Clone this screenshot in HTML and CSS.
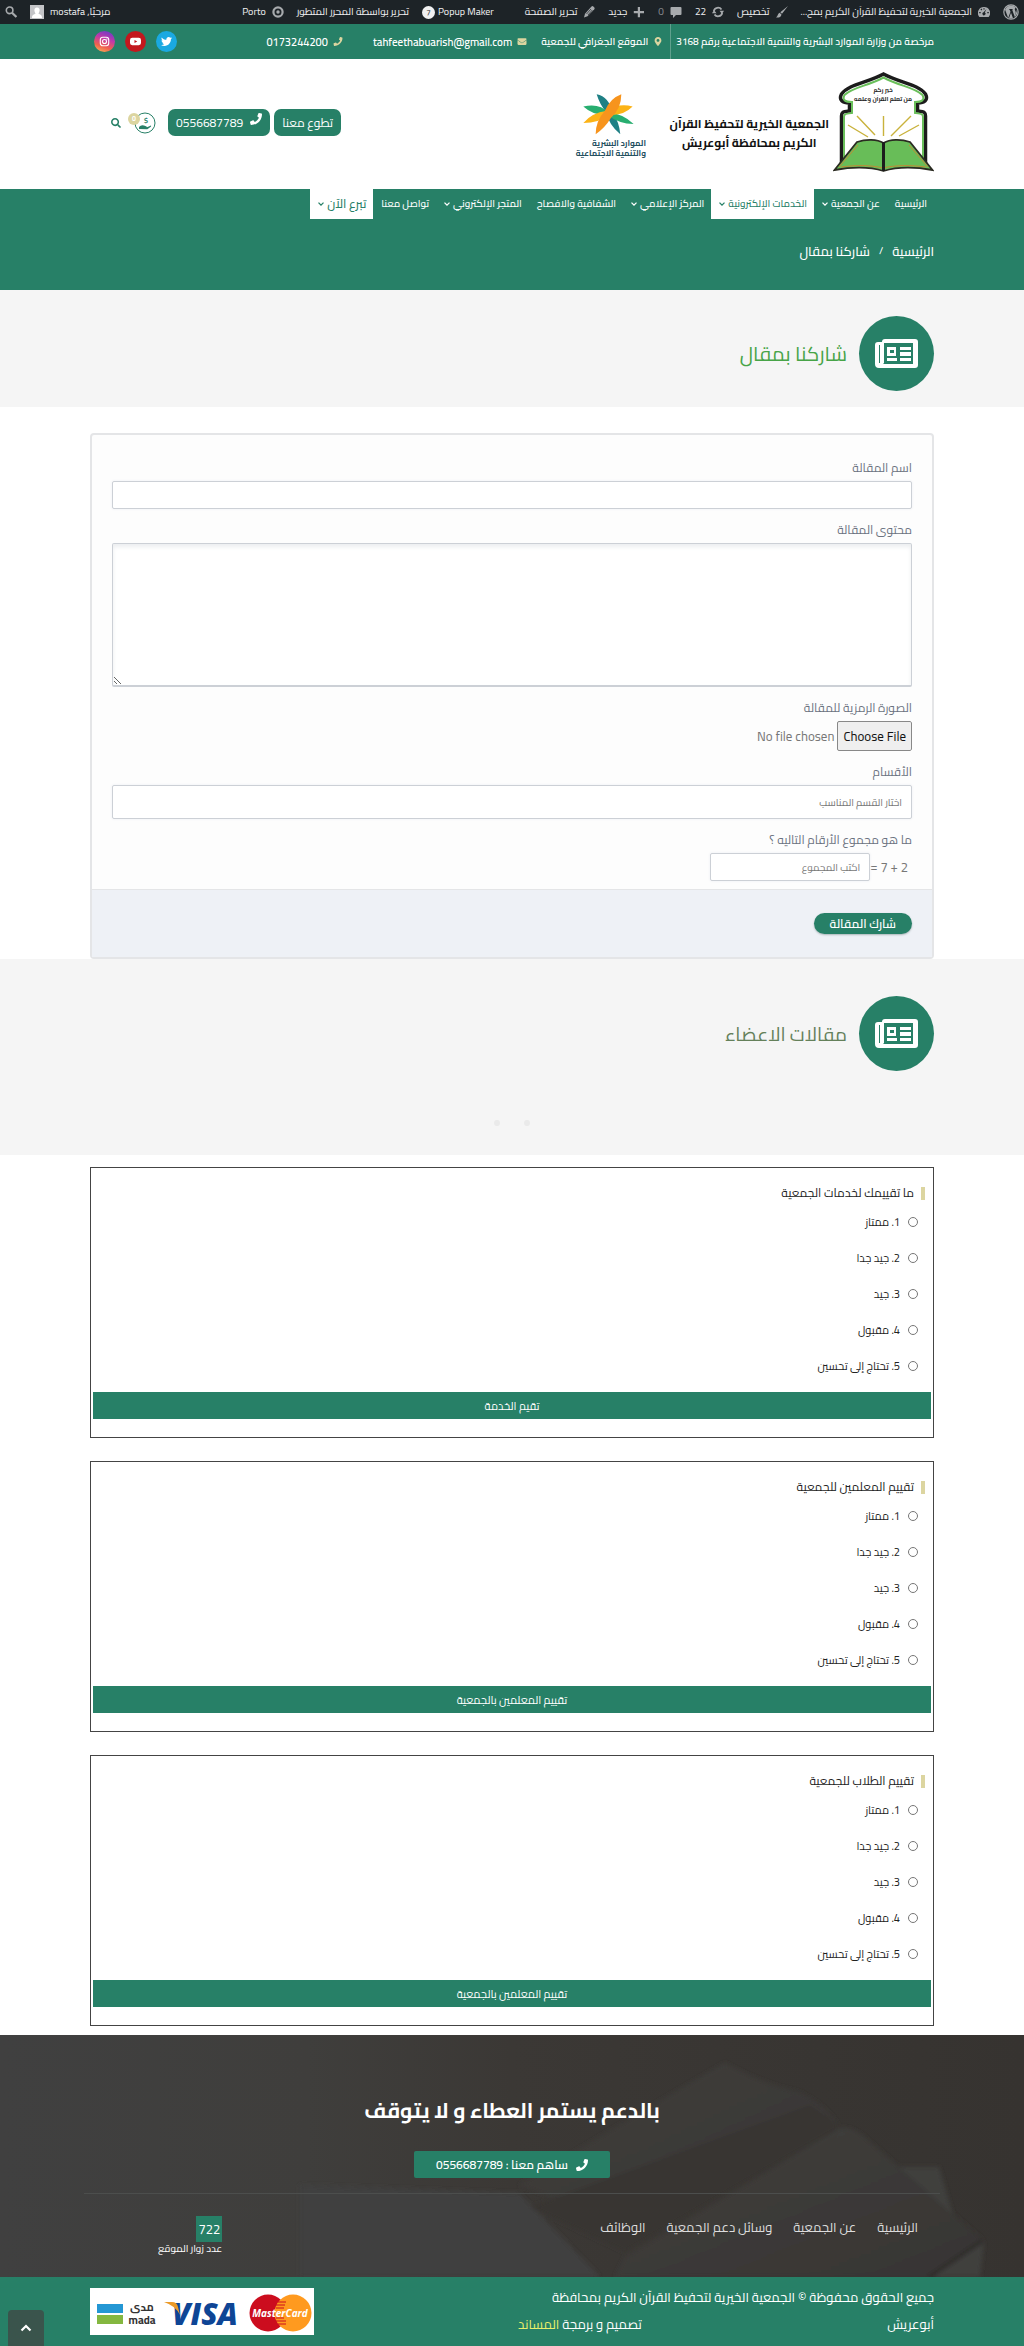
FILE: index.html
```
<!DOCTYPE html>
<html lang="ar" dir="rtl">
<head>
	<meta charset="utf-8">
	<meta name="viewport" content="width=device-width, initial-scale=1">
	<title>شاركنا بمقال</title>
	<link rel="stylesheet" href="styles.css">
</head>
<body>
	<!-- shared icons -->
	<svg class="sprite" aria-hidden="true">
		<symbol id="i-phone" viewBox="0 0 512 512"><path d="M493.4 24.6l-104-24c-11.3-2.6-22.9 3.3-27.5 13.9l-48 112c-4.2 9.8-1.4 21.3 6.9 28l60.6 49.6c-36 76.7-98.9 140.5-177.2 177.2l-49.6-60.6c-6.8-8.3-18.2-11.1-28-6.9l-112 48C3.9 366.5-2 378.1.6 389.4l24 104C27.1 504.2 36.7 512 48 512c256.1 0 464-207.5 464-464 0-11.2-7.7-20.9-18.6-23.4z"/></symbol>
		<symbol id="i-search" viewBox="0 0 512 512"><path d="M505 442.7L405.3 343c-4.5-4.5-10.6-7-17-7H372c27.6-35.3 44-79.7 44-128C416 93.1 322.9 0 208 0S0 93.1 0 208s93.1 208 208 208c48.3 0 92.7-16.4 128-44v16.3c0 6.4 2.5 12.5 7 17l99.7 99.7c9.4 9.4 24.6 9.4 33.9 0l28.3-28.3c9.4-9.4 9.4-24.6.1-34zM208 336c-70.7 0-128-57.2-128-128 0-70.7 57.2-128 128-128 70.7 0 128 57.2 128 128 0 70.7-57.2 128-128 128z"/></symbol>
		<symbol id="i-chevron" viewBox="0 0 6 4"><path d="M.5.6 3 3.1 5.5.6" fill="none" stroke="currentColor" stroke-width="1.3"/></symbol>
		<symbol id="i-news" viewBox="0 0 43 29"><path fill-rule="evenodd" d="M7 3a3 3 0 0 1 3-3h30a3 3 0 0 1 3 3v23a3 3 0 0 1-3 3H4a4 4 0 0 1-4-4V6a3 3 0 0 1 3-3zM9 4v20l-1 1h30V4zM4 6h1v18H4z"/><path fill-rule="evenodd" d="M12 8h9v9h-9zm3 3v3h4v-3zM25 8h11v3H25zM25 13h11v4H25zM12 19h10v3H12zM25 19h11v3H25z"/></symbol>
	</svg>

	<div class="adminbar">
		<ul class="adminbar-menu">
			<li><a href="#" aria-label="WordPress"><svg class="icon-16" viewBox="0 0 16 16"><circle cx="8" cy="8" r="7.2" fill="none" stroke="currentColor" stroke-width="1.2"/><path d="M2 5.5 5.2 14 7.500 7.800 6.600 5.500H6V5h4v.5h-.9L11.600 12.500l1-3.300c.6-2-.8-2.600-.8-4 0-.8.5-1.400 1.200-1.500A6.300 6.300 0 0 0 2.500 5zM8 8.800 6 14.200a6.400 6.400 0 0 0 4 0zM13.700 5.200c.2 1-.1 2-.4 3l-1.900 5.100a6.300 6.300 0 0 0 2.300-8.100z"/></svg></a></li>
			<li><a href="#"><svg class="icon-12" viewBox="0 0 12 12"><path fill-rule="evenodd" d="M6 1a6 6 0 0 1 5 9.500q-.3.500-.8.500H1.800q-.5 0-.8-.5A6 6 0 0 1 6 1zM5.400 2.200h1.200v1.300H5.400zM2.500 3.400l.9-.8.900.9-.9.900zM1.200 6h1.500v1.200H1.200zM9.300 6h1.500v1.200H9.300zM8.500 3 6.800 6.500A1.500 1.500 0 1 1 5.600 6.300z"/></svg>الجمعية الخيرية لتحفيظ القرآن الكريم بمح...</a></li>
			<li><a href="#"><svg class="icon-12" viewBox="0 0 12 12"><path d="M12 0 6 7.700 4.300 6.200zM3.600 6.800 5.500 8.400C5 11 2.500 12 0 11.400c1.700-.5 1.600-3.800 3.600-4.600z"/></svg>تخصيص</a></li>
			<li><a href="#"><svg class="icon-12" viewBox="0 0 12 12"><path d="M1.800 5A4.300 4.300 0 0 1 9.500 3.500M10.200 7A4.300 4.300 0 0 1 2.500 8.500" fill="none" stroke="currentColor" stroke-width="1.800"/><path d="M12 4.800H7.500L10 8zM0 7.200h4.500L2 4z"/></svg>22</a></li>
			<li><a href="#" class="muted"><svg class="icon-12" viewBox="0 0 12 12"><path d="M1.500 1h9q1 0 1 1v6q0 1-1 1H6l-3 3V9H1.500q-1 0-1-1V2q0-1 1-1z"/></svg>0</a></li>
			<li><a href="#"><svg class="icon-12" viewBox="0 0 12 12"><path d="M4.800 1h2.200v4h4v2.200h-4v4H4.800v-4h-4V5h4z"/></svg>جديد</a></li>
			<li class="wide"><a href="#"><svg class="icon-12" viewBox="0 0 12 12"><path d="M8.500.5q1-.8 1.800 0l1 1q.7.8 0 1.700L4.500 10.300 1 11.500l1-3.700z"/><path d="M8 3 3.500 8M9.300 4 5 9" stroke="#1d2327" stroke-width=".7"/></svg>تحرير الصفحة</a></li>
			<li><a href="#" dir="ltr"><span class="popup-icon">7</span>Popup Maker</a></li>
			<li><a href="#">تحرير بواسطة المحرر المتطور</a></li>
			<li><a href="#"><svg class="icon-12" viewBox="0 0 12 12"><circle cx="6" cy="6" r="4.600" fill="none" stroke="currentColor" stroke-width="2.200"/><circle cx="6" cy="6" r="1.700"/></svg>Porto</a></li>
		</ul>
		<ul class="adminbar-menu">
			<li><a href="#">مرحبًا, mostafa<svg class="avatar" viewBox="0 0 14 14"><path fill="#c3c4c7" d="M0 0h14v14H0z"/><path fill="#fff" d="M7 2.500c2 0 2.800 1.400 2.600 3S8.500 8 8.500 8.800c1.500.7 3.500.9 3.500 4.200H2c0-3.300 2-3.500 3.500-4.200C5.500 8 4.500 7 4.400 5.500s.6-3 2.600-3z"/></svg></a></li>
			<li><a href="#" aria-label="بحث"><svg class="icon-12" viewBox="0 0 12 12"><circle cx="4.600" cy="4.300" r="3.300" fill="none" stroke="currentColor" stroke-width="1.600"/><path d="M7 6.700 11.400 11" stroke="currentColor" stroke-width="2.200"/></svg></a></li>
		</ul>
	</div>

	<div class="topbar">
		<div class="container topbar-inner">
			<span class="license">مرخصة من وزارة الموارد البشرية والتنمية الاجتماعية برقم 3168</span>
			<a href="#" class="contact location"><svg viewBox="0 0 384 512"><path d="M172.268 501.670C26.970 291.031 0 269.413 0 192 0 85.961 85.961 0 192 0s192 85.961 192 192c0 77.413-26.970 99.031-172.268 309.670-9.535 13.774-29.930 13.773-39.464 0zM192 272c44.183 0 80-35.817 80-80s-35.817-80-80-80-80 35.817-80 80 35.817 80 80 80z"/></svg>الموقع الجغرافي للجمعية</a>
			<a href="#" class="contact mail"><svg viewBox="0 0 512 512"><path d="M502.300 190.800c3.900-3.100 9.700-.2 9.700 4.700V400c0 26.500-21.500 48-48 48H48c-26.500 0-48-21.500-48-48V195.600c0-5 5.700-7.800 9.700-4.700 22.400 17.400 52.100 39.500 154.100 113.600 21.100 15.400 56.700 47.800 92.200 47.600 35.700.3 72-32.800 92.300-47.600 102-74.100 131.600-96.300 154-113.700zM256 320c23.200.4 56.600-29.200 73.400-41.400 132.700-96.300 142.800-104.700 173.400-128.700 5.800-4.500 9.200-11.500 9.200-18.900v-19c0-26.500-21.500-48-48-48H48c-26.500 0-48 21.500-48 48v19c0 7.400 3.400 14.300 9.200 18.900 30.600 23.900 40.700 32.400 173.400 128.700 16.800 12.200 50.200 41.800 73.400 41.400z"/></svg>tahfeethabuarish@gmail.com</a>
			<a href="#" class="contact phone"><svg><use href="#i-phone"/></svg>0173244200</a>
			<div class="social">
				<a href="#" class="twitter" aria-label="Twitter"><svg viewBox="0 0 512 512"><path d="M459.370 151.716c.325 4.548.325 9.097.325 13.645 0 138.720-105.583 298.558-298.558 298.558-59.452 0-114.680-17.219-161.137-47.106 8.447.974 16.568 1.299 25.340 1.299 49.055 0 94.213-16.568 130.274-44.832-46.132-.975-84.792-31.188-98.112-72.772 6.498.974 12.995 1.624 19.818 1.624 9.421 0 18.843-1.300 27.614-3.573-48.081-9.747-84.143-51.980-84.143-102.985v-1.299c13.969 7.797 30.214 12.670 47.431 13.319-28.264-18.843-46.781-51.005-46.781-87.391 0-19.492 5.197-37.360 14.294-52.954 51.655 63.675 129.300 105.258 216.365 109.807-1.624-7.797-2.599-15.918-2.599-24.040 0-57.828 46.782-104.934 104.934-104.934 30.213 0 57.502 12.670 76.670 33.137 23.715-4.548 46.456-13.320 66.599-25.340-7.798 24.366-24.366 44.833-46.132 57.827 21.117-2.273 41.584-8.122 60.426-16.243-14.292 20.791-32.161 39.308-52.628 54.253z"/></svg></a>
				<a href="#" class="youtube" aria-label="YouTube"><svg viewBox="0 0 12 12"><path fill-rule="evenodd" d="M2.500 2h7Q12 2 12 4.300v3.400Q12 10 9.500 10h-7Q0 10 0 7.700V4.300Q0 2 2.500 2zM4.900 4.300v3.400l3-1.700z"/></svg></a>
				<a href="#" class="instagram" aria-label="Instagram"><svg viewBox="0 0 12 12"><g fill="none" stroke="currentColor" stroke-width="1.200"><rect x="1.400" y="1.400" width="9.200" height="9.200" rx="2.600"/><circle cx="6" cy="6" r="2.200"/></g><circle cx="8.600" cy="3.400" r=".7"/></svg></a>
			</div>
		</div>
	</div>

	<header class="header">
		<div class="container header-inner">
			<a href="#" class="logo" aria-label="الجمعية الخيرية لتحفيظ القرآن">
				<svg viewBox="0 0 101 101">
					<path d="M8.500 92V44c0-4 1-4 8-5v-8c-7 0-11-3-8-9C16 12 34 11 50.500 2 67 11 85 12 92.500 22c3 6-1 9-8 9v8c7 1 8 1 8 5v48" fill="#fff" stroke="#1c1c1c" stroke-width="3.500"/>
					<path d="M11 90V45c0-3 1-3 8-4V30c-7 0-10-2-7.500-7C20 15 35 14 50.500 5.500 66 14 81 15 89.500 23c2.500 5-.5 7-7.500 7v11c7 1 8 1 8 4v45" fill="none" stroke="#6abf5b" stroke-width="2"/>
					<text x="50" y="20" class="logo-verse">خير ركم</text>
					<text x="50" y="29" class="logo-verse">من تعلم القرآن وعلمه</text>
					<path d="M50.500 44v20M24 44l18 19M78 44 58 64M15 53l20 12M86 53 66 64" stroke="#c9b23c" stroke-width="1.400"/>
					<path d="M1.500 98 24 70c9-3 20-3 26.500 1C57 67 68 67 77 70l22.500 28c-17-3-36-3-49 1-13-4-32-4-49-1z" fill="#68bd58" stroke="#2b2b22" stroke-width="1.800"/>
					<path d="M6 95 25 73M95 95 76 73M8 95c15-2 30-2 42 1 12-3 28-3 43-1" fill="none" stroke="#c08a35" stroke-width="1"/>
					<path d="M50.500 70v29" stroke="#1c1c1c" stroke-width="3"/>
				</svg>
			</a>
			<h1 class="site-name">الجمعية الخيرية لتحفيظ القرآن<br>الكريم بمحافظة أبوعريش</h1>
			<svg class="ministry" viewBox="0 0 74 74">
				<path d="M25 9q12 2 16 19 6 8 7 20-11-9-14-22-6-7-9-17z" fill="#1f8085"/>
				<path d="M12 21q15-4 25 6 14 1 24 11-14 0-26-9-13 1-23-8z" fill="#28ae70"/>
				<path d="M60 21q-13-4-25 4-15 2-23 12 15 0 26-8 13 1 22-8z" fill="#fcb316"/>
				<path d="M49 9q0 14-10 23-6 10-15 16 0-13 9-23Q38 13 49 9z" fill="#f7941d"/>
				<text x="73" y="59" class="ministry-text">الموارد البشرية</text>
				<text x="73" y="69" class="ministry-text">والتنمية الاجتماعية</text>
			</svg>
			<div class="header-actions">
				<a href="#" class="btn">تطوع معنا</a>
				<a href="#" class="btn"><svg><use href="#i-phone"/></svg>0556687789</a>
				<a href="#" class="donate" aria-label="سلة التبرعات">
					<svg viewBox="0 0 22 22"><circle cx="11" cy="11" r="10" fill="#fff" stroke="#278067"/><path d="M5 15q2-2.500 5-1.500l2 .7q1.200.4.8 1 2-.4 4-1.700.8.600 0 1.200l-3.500 2.500-8.300-.2z" fill="#278067"/><text x="12" y="11" class="donate-sign">$</text></svg>
					<span class="badge">0</span>
				</a>
				<a href="#" class="search" aria-label="بحث"><svg><use href="#i-search"/></svg></a>
			</div>
		</div>
	</header>

	<div class="navband">
		<div class="container">
			<nav>
				<ul class="nav">
					<li><a href="#">الرئيسية</a></li>
					<li><a href="#">عن الجمعية<svg><use href="#i-chevron"/></svg></a></li>
					<li><a href="#" class="current">الخدمات الإلكترونية<svg><use href="#i-chevron"/></svg></a></li>
					<li><a href="#">المركز الإعلامي<svg><use href="#i-chevron"/></svg></a></li>
					<li><a href="#">الشفافية والافصاح</a></li>
					<li><a href="#">المتجر الإلكتروني<svg><use href="#i-chevron"/></svg></a></li>
					<li><a href="#">تواصل معنا</a></li>
					<li><a href="#" class="current give">تبرع الآن<svg><use href="#i-chevron"/></svg></a></li>
				</ul>
			</nav>
			<div class="breadcrumb"><a href="#">الرئيسية</a><span class="sep">/</span><span>شاركنا بمقال</span></div>
		</div>
	</div>

	<main>
		<section class="title-band">
			<div class="container title-row">
				<span class="title-icon"><svg><use href="#i-news"/></svg></span>
				<h2>شاركنا بمقال</h2>
			</div>
		</section>

		<div class="container">
			<form class="article-form">
				<div class="form-body">
					<div class="field">
						<label for="name">اسم المقالة</label>
						<input type="text" id="name">
					</div>
					<div class="field">
						<label for="content">محتوى المقالة</label>
						<textarea id="content"></textarea>
					</div>
					<div class="field">
						<label for="image">الصورة الرمزية للمقالة</label>
						<input type="file" id="image">
					</div>
					<div class="field">
						<label for="category">الأقسام</label>
						<input type="text" id="category" class="tall" placeholder="اختار القسم المناسب">
					</div>
					<div class="field">
						<label for="sum">ما هو مجموع الأرقام التاليه ؟</label>
						<div class="sum-row"><span>2 + 7 =</span><input type="text" id="sum" placeholder="اكتب المجموع"></div>
					</div>
				</div>
				<div class="form-footer"><button type="button" class="submit">شارك المقالة</button></div>
			</form>
		</div>

		<section class="title-band members">
			<div class="container title-row">
				<span class="title-icon"><svg><use href="#i-news"/></svg></span>
				<h2>مقالات الاعضاء</h2>
			</div>
			<div class="dots"><span></span><span></span></div>
		</section>

		<div class="container surveys">
			<form class="survey">
				<h3>ما تقييمك لخدمات الجمعية</h3>
				<label><input type="radio" name="s1">1. ممتاز</label>
				<label><input type="radio" name="s1">2. جيد جدا</label>
				<label><input type="radio" name="s1">3. جيد</label>
				<label><input type="radio" name="s1">4. مقبول</label>
				<label><input type="radio" name="s1">5. تحتاج إلى تحسين</label>
				<button type="button">تقيم الخدمة</button>
			</form>
			<form class="survey">
				<h3>تقييم المعلمين للجمعية</h3>
				<label><input type="radio" name="s2">1. ممتاز</label>
				<label><input type="radio" name="s2">2. جيد جدا</label>
				<label><input type="radio" name="s2">3. جيد</label>
				<label><input type="radio" name="s2">4. مقبول</label>
				<label><input type="radio" name="s2">5. تحتاج إلى تحسين</label>
				<button type="button">تقييم المعلمين بالجمعية</button>
			</form>
			<form class="survey">
				<h3>تقييم الطلاب للجمعية</h3>
				<label><input type="radio" name="s3">1. ممتاز</label>
				<label><input type="radio" name="s3">2. جيد جدا</label>
				<label><input type="radio" name="s3">3. جيد</label>
				<label><input type="radio" name="s3">4. مقبول</label>
				<label><input type="radio" name="s3">5. تحتاج إلى تحسين</label>
				<button type="button">تقييم المعلمين بالجمعية</button>
			</form>
		</div>
	</main>

	<footer>
		<div class="footer-main">
			<!-- faint open book behind the text -->
			<svg class="footer-bg" viewBox="0 0 1024 242" preserveAspectRatio="xMidYMid slice" aria-hidden="true">
				<defs>
					<linearGradient id="bg"><stop offset="0" stop-color="#404040"/><stop offset=".3" stop-color="#3f3e3c"/><stop offset=".5" stop-color="#3b3835"/><stop offset="1" stop-color="#363330"/></linearGradient>
					<linearGradient id="page" x1="0" y1="0" x2="1" y2="1"><stop offset="0" stop-color="#3f3f3d"/><stop offset="1" stop-color="#383533"/></linearGradient>
					<filter id="soft"><feGaussianBlur stdDeviation="2"/></filter>
				</defs>
				<path fill="url(#bg)" d="M0 0h1024v242H0z"/>
				<g filter="url(#soft)">
					<path fill="#404040" d="M300 150 519 158 600 242H300z"/>
					<path fill="url(#page)" d="M725 28q35 20 74 29 30 15 40 35L600 180 519 150 660 66z"/>
					<path fill="#393532" d="M530 172 810 70l30 22-215 125z"/>
					<path fill="url(#page)" d="M625 222 835 96q10-8 27 4l120 104-53 38H615z"/>
					<path fill="#3f3f3d" d="M899 132h40l14 48zM960 222l24-16-4 36h-50z"/>
					<path stroke="#2e2c2a" stroke-width="4" d="M929 242 982 206"/>
				</g>
			</svg>
			<div class="container">
				<h2>بالدعم يستمر العطاء و لا يتوقف</h2>
				<a href="#" class="support"><svg><use href="#i-phone"/></svg>ساهم معنا : 0556687789</a>
				<div class="footer-row">
					<ul class="footer-menu">
						<li><a href="#">الرئيسية</a></li>
						<li><a href="#">عن الجمعية</a></li>
						<li><a href="#">وسائل دعم الجمعية</a></li>
						<li><a href="#">الوظائف</a></li>
					</ul>
					<div class="visitors"><span class="count">722</span><span>عدد زوار الموقع</span></div>
				</div>
			</div>
		</div>
		<div class="footer-bottom">
			<div class="container bottom-row">
				<p class="copyright">جميع الحقوق محفوظة © الجمعية الخيرية لتحفيظ القرآن الكريم بمحافظة أبوعريش <span class="credits">تصميم و برمجة <a href="#">المساند</a></span></p>
				<svg class="cards" viewBox="0 0 224 47">
					<path fill="#fff" d="M0 0h224v47H0z"/>
					<path fill="#2497d4" d="M7 16h26v9H7z"/>
					<path fill="#84b740" d="M7 27h26v9H7z"/>
					<text x="52" y="23" class="mada">مدى</text>
					<text x="52" y="36" class="mada">mada</text>
					<text x="115" y="37" class="visa">VISA</text>
					<path fill="#eb9a28" d="M74 14h8q5 0 6 5l2 8q-4-9-16-13z"/>
					<circle cx="178" cy="25" r="18.500" fill="#cc0d1e"/>
					<circle cx="203" cy="25" r="18.500" fill="#ff9a1f"/>
					<path stroke="#cc0d1e" d="M188 14h8M186 17h9M186 20h8M186 30h8M186 33h10M188 36h8"/>
					<text x="190" y="29" class="master">MasterCard</text>
				</svg>
			</div>
		</div>
	</footer>

	<a href="#" class="to-top" aria-label="أعلى الصفحة"><svg viewBox="0 0 12 8"><path d="M1.500 6.500 6 2l4.500 4.500" fill="none" stroke="currentColor" stroke-width="2.200"/></svg></a>
</body>
</html>
```
FILE: styles.css
```
*{
	margin: 0;
	padding: 0;
	box-sizing: border-box;
}
body{
	font-family: "Cairo", "Noto Sans", "DejaVu Sans", sans-serif;
	font-size: 12px;
	line-height: 22px;
	color: #777;
	background: #fff;
}
ul{
	list-style: none;
}
a{
	color: inherit;
	text-decoration: none;
}
svg{
	display: block;
	flex: none;
	fill: currentColor;
}
input, textarea, button{
	font-family: inherit;
}
.sprite{
	position: absolute;
	width: 0;
	height: 0;
}
.container{
	max-width: 1324px;
	margin: 0 auto;
	padding: 0 90px;
}

/* admin bar */
.adminbar{
	display: flex;
	justify-content: space-between;
	height: 24px;
	padding: 0 5px;
	background: #1d2327;
	color: #f0f0f1;
	font-size: 10px;
	line-height: 24px;
}
.adminbar-menu{
	display: flex;
	gap: 13px;
}
.adminbar-menu a{
	display: flex;
	align-items: center;
	gap: 6px;
	height: 24px;
	white-space: nowrap;
}
.adminbar-menu svg{
	color: #a7aaad;
}
.adminbar-menu .wide{
	margin-left: 18px;
}
.adminbar-menu .muted{
	color: #8c8f94;
}
.icon-16{
	width: 16px;
	height: 16px;
}
.icon-12{
	width: 12px;
	height: 12px;
}
.avatar{
	width: 14px;
	height: 14px;
}
.popup-icon{
	width: 13px;
	height: 13px;
	margin-right: -3px;
	border-radius: 50%;
	background: #f0f0f1;
	color: #1d2327;
	font-size: 8px;
	line-height: 13px;
	text-align: center;
}

/* top bar */
.topbar{
	background: #278067;
	color: #fff;
	font-size: 10px;
	font-weight: 600;
}
.topbar-inner{
	display: flex;
	align-items: center;
	height: 35px;
}
.license{
	padding-left: 5px;
	border-left: 1px solid #5fa08d;
	line-height: 35px;
}
.contact{
	display: flex;
	align-items: center;
	gap: 5px;
}
.contact svg{
	width: 10px;
	height: 9px;
	color: #dcd5a0;
}
.location{
	margin-right: 7px;
}
.mail{
	margin-right: 14px;
	font-size: 11px;
}
.phone{
	margin-right: 30px;
	font-size: 11px;
}
.social{
	display: flex;
	gap: 10px;
	margin: 0 auto 0 4px;
}
.social a{
	display: flex;
	align-items: center;
	justify-content: center;
	width: 21px;
	height: 21px;
	border-radius: 50%;
}
.social svg{
	width: 11px;
	height: 11px;
}
.twitter{
	background: #1aa9e1;
}
.youtube{
	background: #c3181e;
}
.instagram{
	background: linear-gradient(200deg, #5b3ad0 0%, #c13aa8 40%, #f0614d 70%, #fbc45c 100%);
}

/* header */
.header-inner{
	display: flex;
	align-items: center;
	padding-top: 13px;
	padding-bottom: 16px;
}
.logo svg{
	width: 101px;
	height: 101px;
}
.logo-verse{
	font-size: 6px;
	font-weight: 700;
	fill: #222;
	text-anchor: middle;
}
.site-name{
	padding-top: 20px;
	margin: 0 4px 0 23px;
	font-size: 12px;
	font-weight: 700;
	line-height: 19px;
	color: #111;
	text-align: center;
}
.ministry{
	width: 76px;
	height: 76px;
	overflow: visible;
}
.ministry-text{
	font-size: 8px;
	font-weight: 700;
	fill: #24505f;
}
.header-actions{
	display: flex;
	align-items: center;
	margin: 0 auto 0 21px;
	color: #278067;
}
.btn{
	display: flex;
	gap: 7px;
	margin-left: 4px;
	padding: 0 8px;
	border-radius: 7px;
	background: #278067;
	color: #fff;
	line-height: 27px;
}
.btn svg{
	width: 12px;
	height: 12px;
	margin-top: 4px;
}
.donate{
	position: relative;
	margin: 0 8px 0 7px;
}
.donate svg{
	width: 22px;
	height: 22px;
}
.donate-sign{
	font-size: 7px;
	font-weight: 700;
	fill: #278067;
	text-anchor: middle;
}
.badge{
	position: absolute;
	top: 1px;
	left: -6px;
	width: 12px;
	height: 12px;
	border-radius: 50%;
	background: #dcd5a0;
	color: #fff;
	font-size: 7px;
	font-weight: 700;
	line-height: 12px;
	text-align: center;
}
.search{
	margin-right: 6px;
}
.search svg{
	width: 10px;
	height: 10px;
}

/* navigation */
.navband{
	padding-bottom: 28px;
	background: #278067;
	color: #fff;
}
.nav{
	display: flex;
	font-size: 10px;
	font-weight: 500;
}
.nav a{
	display: flex;
	align-items: center;
	gap: 3px;
	height: 30px;
	padding: 0 7px 0 8px;
	white-space: nowrap;
}
.nav svg{
	width: 6px;
	height: 4px;
}
.nav .current{
	background: #fff;
	color: #278067;
}
.nav .give{
	font-size: 12px;
}
.breadcrumb{
	display: flex;
	gap: 9px;
	margin-top: 21px;
	font-size: 13px;
	font-weight: 500;
}
.breadcrumb .sep{
	font-size: 10px;
}

/* page titles */
.title-band{
	padding: 26px 0 16px;
	background: #f5f5f5;
}
.title-row{
	display: flex;
	align-items: center;
	gap: 12px;
}
.title-icon{
	display: flex;
	align-items: center;
	justify-content: center;
	width: 75px;
	height: 75px;
	border-radius: 50%;
	background: #278067;
	color: #fff;
}
.title-icon svg{
	width: 43px;
	height: 29px;
}
.title-row h2{
	font-size: 20px;
	font-weight: 400;
	color: #47a447;
}
.members{
	padding: 37px 0 29px;
}
.members h2{
	font-size: 19px;
	color: #64805a;
}
.dots{
	display: flex;
	justify-content: center;
	gap: 24px;
	margin-top: 49px;
}
.dots span{
	width: 6px;
	height: 6px;
	border-radius: 50%;
	background: #eaeaea;
}

/* article form */
.article-form{
	margin-top: 26px;
	border: 2px solid #e4e5e7;
	border-radius: 4px;
	background: #fdfdfd;
}
.form-body{
	display: grid;
	gap: 10px;
	padding: 22px 20px 8px;
}
.field{
	display: grid;
	gap: 2px;
}
.field label{
	color: #6b7280;
}
.field input, .field textarea{
	display: block;
	width: 100%;
	height: 28px;
	padding: 0 9px;
	border: 1px solid #ccd0d6;
	border-radius: 2px;
	background: #fff;
	font-size: 10px;
	color: #777;
	box-shadow: 0 0 3px #eceef2;
}
.field textarea{
	height: 144px;
	border-bottom-width: 2px;
	box-shadow: inset 0 3px 4px #eceef0;
}
.field .tall{
	height: 34px;
}
.field ::placeholder{
	color: #777;
}
.field input[type="file"]{
	height: 30px;
	padding: 0;
	border: 0;
	background: none;
	box-shadow: none;
	font-size: 13px;
	line-height: 30px;
}
.field ::file-selector-button{
	height: 30px;
	margin-left: 3px;
	padding: 0 5px;
	border: 1px solid #888;
	border-radius: 2px;
	background: #efefef;
	font-family: inherit;
	font-size: 13px;
	color: #111;
}
.sum-row{
	display: flex;
	align-items: center;
	padding-right: 4px;
	font-size: 13px;
}
.sum-row input{
	width: 160px;
}
.form-footer{
	padding: 23px 20px;
	border-top: 1px solid #e4e5e7;
	background: #eef1f6;
}
.submit{
	display: block;
	height: 21px;
	padding: 0 16px;
	border: 0;
	border-radius: 11px;
	background: #278067;
	color: #fff;
	font-size: 12px;
	font-weight: 600;
	line-height: 21px;
	box-shadow: 0 1px 2px #a9b5b8;
}

/* surveys */
.surveys{
	display: grid;
	gap: 23px;
	padding-top: 12px;
	padding-bottom: 9px;
}
.survey{
	padding: 14px 2px 18px;
	border: 1px solid #444;
	color: #222;
}
.survey h3{
	display: flex;
	align-items: center;
	gap: 7px;
	padding-right: 6px;
	font-size: 12px;
	font-weight: 400;
}
.survey h3::before{
	content: "";
	width: 4px;
	height: 13px;
	background: #dcd5a0;
}
.survey label{
	display: flex;
	align-items: center;
	gap: 8px;
	height: 36px;
	padding-right: 13px;
	font-size: 11px;
}
.survey input{
	width: 10px;
	height: 10px;
}
.survey button{
	display: block;
	width: 100%;
	height: 27px;
	margin-top: 8px;
	border: 0;
	background: #278067;
	color: #fff;
	font-size: 11px;
}

/* footer */
.footer-main{
	position: relative;
	padding: 60px 0 21px;
	background: #3c3a38;
	color: #fff;
}
.footer-bg{
	position: absolute;
	top: 0;
	left: 0;
	width: 100%;
	height: 100%;
}
.footer-main .container{
	position: relative;
	text-align: center;
}
.footer-main h2{
	font-size: 21px;
	font-weight: 700;
	line-height: 32px;
}
.support{
	display: flex;
	align-items: center;
	gap: 8px;
	width: max-content;
	height: 27px;
	margin: 24px auto 15px;
	padding: 0 22px;
	border-radius: 2px;
	background: #278067;
	font-weight: 600;
}
.support svg{
	width: 12px;
	height: 12px;
}
.footer-row{
	display: flex;
	justify-content: space-between;
	margin: 0 -6px;
	padding: 22px 22px 0 74px;
	border-top: 1px solid #4c4e4d;
}
.footer-menu{
	display: flex;
	gap: 21px;
	font-size: 13px;
	color: #ddd;
}
.visitors{
	display: flex;
	flex-direction: column;
	align-items: flex-start;
	font-size: 10px;
	line-height: 14px;
}
.count{
	padding: 0 2px;
	background: #278067;
	font-size: 13px;
	line-height: 26px;
}
.footer-bottom{
	padding: 7px 0 8px;
	background: #278067;
	color: #fff;
	font-size: 13px;
	line-height: 27px;
}
.bottom-row{
	display: flex;
	align-items: center;
	justify-content: space-between;
}
.copyright{
	flex: 0 0 50%;
	padding-left: 6px;
}
.credits{
	float: left;
}
.credits a{
	color: #eaf06a;
}
.cards{
	width: 224px;
	height: 47px;
	direction: ltr;
}
.mada{
	font-size: 11px;
	font-weight: 700;
	fill: #333;
	text-anchor: middle;
}
.visa{
	font: italic 800 30px "Open Sans", sans-serif;
	fill: #0e4595;
	text-anchor: middle;
}
.master{
	font: italic 700 10px "Open Sans", sans-serif;
	fill: #fff;
	text-anchor: middle;
}
.to-top{
	position: fixed;
	bottom: 0;
	left: 8px;
	display: flex;
	align-items: center;
	justify-content: center;
	width: 36px;
	height: 36px;
	border-radius: 4px 4px 0 0;
	background: #3a544c;
	color: #fff;
}
.to-top svg{
	width: 12px;
	height: 8px;
}
```
